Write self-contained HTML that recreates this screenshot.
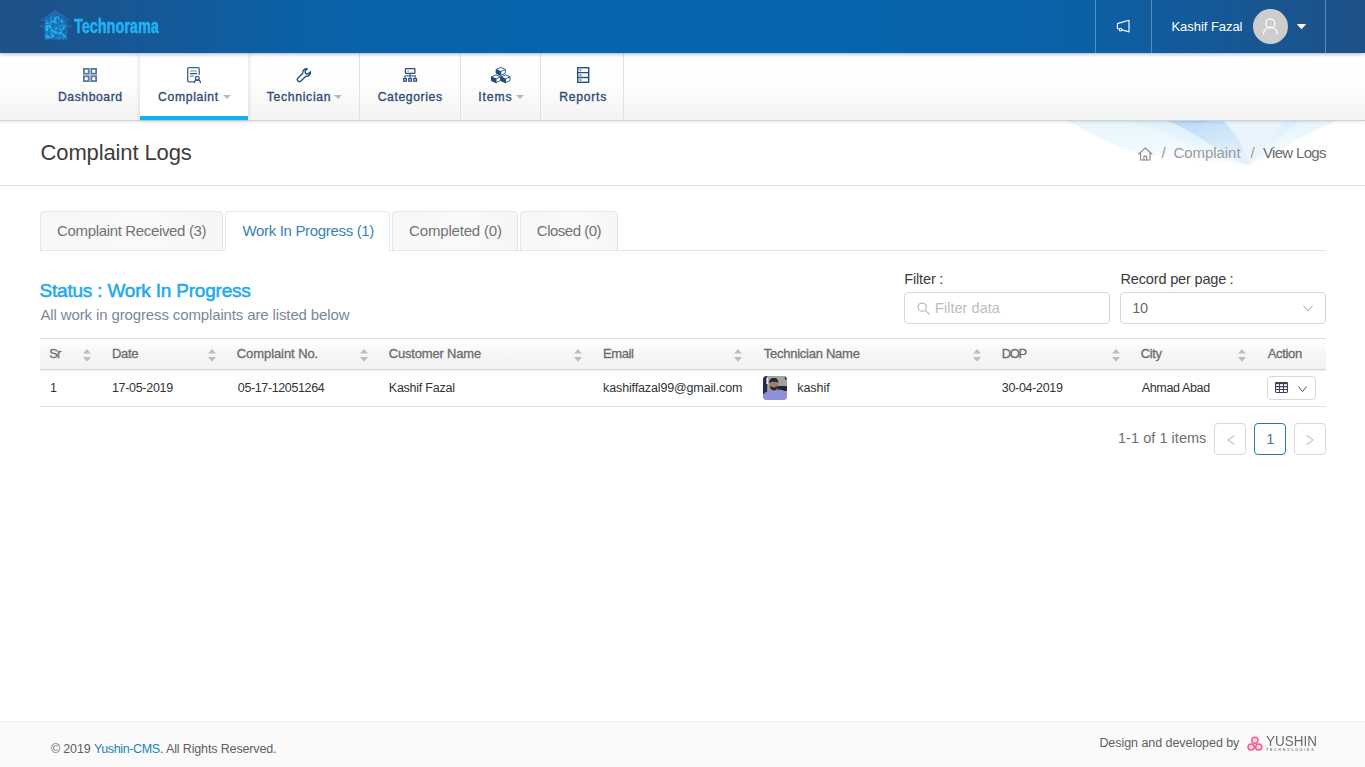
<!DOCTYPE html>
<html lang="en">
<head>
<meta charset="utf-8">
<title>Complaint Logs</title>
<style>
*{box-sizing:border-box;margin:0;padding:0}
html,body{width:1365px;height:767px;overflow:hidden;background:#fff}
body{font-family:"Liberation Sans","DejaVu Sans",sans-serif;font-size:14px;color:#333;position:relative}
a{text-decoration:none;color:inherit}
.t{position:absolute;white-space:pre;line-height:normal}
.a{position:absolute}
svg{position:absolute;overflow:visible}
/* header */
#hdr{position:absolute;left:0;top:0;width:1365px;height:53px;background:linear-gradient(to right,#1f5088 0%,#0b61a6 22%,#0564ae 40%,#0564ae 62%,#0b61a6 78%,#1f5088 100%);box-shadow:0 1px 4px rgba(8,50,100,.38);z-index:3}
.hsep{position:absolute;top:0;width:1px;height:53px;background:rgba(255,255,255,.3)}
#avatar{position:absolute;left:1253px;top:9px;width:35px;height:35px;border-radius:50%;background:#cdcdcd}
/* nav */
#nav{position:absolute;left:0;top:53px;width:1365px;height:68px;background:linear-gradient(to bottom,#fff 0%,#fefefe 45%,#f3f3f3 100%);border-bottom:1px solid #d2d2d2;box-shadow:0 1px 3px rgba(0,0,0,.10);z-index:2}
.ni{position:absolute;top:0;height:67px;border-right:1px solid #e1e1e1}
.ni.act{background:#fff;border-right:none;border-bottom:4px solid #0eb1f0;box-shadow:0 0 5px rgba(0,0,0,.16)}
.car{position:absolute;width:0;height:0;border-left:4px solid transparent;border-right:4px solid transparent;border-top:4px solid #b4bac3}
/* title */
#ttlline{position:absolute;left:0;top:185px;width:1365px;height:1px;background:#e3e3e3}
/* tabs */
#tabline{position:absolute;left:40px;top:250px;width:1286px;height:1px;background:#e4e4e4}
.tab{position:absolute;top:211px;height:40px;border:1px solid #e6e6e6;border-radius:4px 4px 0 0;background:linear-gradient(to right,#f7f7f7 0%,#fafafa 60%,#f6f6f6 100%)}
.tab.act{background:#fff;border-bottom-color:#fff}
.inp{position:absolute;top:292px;height:32px;width:206px;border:1px solid #d6d6d6;border-radius:4px;background:#fff}
/* table */
#th{position:absolute;left:40px;top:338px;width:1286px;height:32px;background:linear-gradient(to bottom,#fff 0%,#fdfdfd 15%,#f6f6f6 50%,#f2f2f2 100%);border-top:1px solid #dcdcdc;border-bottom:1px solid #d9d9d9;box-shadow:0 1px 0 #efefef}
#rowline{position:absolute;left:40px;top:406px;width:1286px;height:1px;background:#e0e0e0}
.so{position:absolute;top:349.5px;width:8px;height:12px}
.so:before,.so:after{content:"";position:absolute;left:0;width:0;height:0;border-left:4px solid transparent;border-right:4px solid transparent}
.so:before{top:0;border-bottom:4.6px solid #c1c1c1}
.so:after{top:7.4px;border-top:4.6px solid #c1c1c1}
.btn{position:absolute;border:1px solid #d9d9d9;border-radius:4px;background:#fff}
/* footer */
#ft{position:absolute;left:0;top:721px;width:1365px;height:46px;background:#fafafa;border-top:1px solid #f1f1f1}
</style>
</head>
<body>
<div id="hdr">
  <svg style="left:40px;top:10px" width="32" height="31" viewBox="0 0 32 31" fill="none" stroke="#3fb0f0" stroke-width=".8">
<path d="M15.2 1.6 L2.9 11 H5.1 V29.5 H26.5 V11 H27.5 Z" fill="#1b8cdb" fill-opacity=".5" stroke="none"/>
<g fill="#27b8fb" stroke="none"><rect x="21.3" y="23.6" width="3" height="2" fill-opacity="0.5"/><rect x="18.9" y="26.4" width="2.5" height="1.5" fill-opacity="0.5"/><rect x="5.6" y="18.9" width="1.5" height="1.2" fill-opacity="0.65"/><rect x="9.8" y="12.1" width="1.5" height="2.5" fill-opacity="0.65"/><rect x="17.5" y="21.3" width="3" height="1.2" fill-opacity="0.5"/><rect x="23.3" y="15.2" width="2" height="2" fill-opacity="0.8"/><rect x="14.3" y="7.2" width="1.5" height="2.5" fill-opacity="0.8"/><rect x="11.8" y="24.8" width="2.5" height="2" fill-opacity="1"/><rect x="18.2" y="27.8" width="1.2" height="1.5" fill-opacity="0.5"/><rect x="11.0" y="11.9" width="1.5" height="2.5" fill-opacity="0.8"/><rect x="17.3" y="23.2" width="2.5" height="1.2" fill-opacity="0.8"/><rect x="15.3" y="12.1" width="1.5" height="2" fill-opacity="0.65"/><rect x="10.0" y="23.7" width="2" height="2" fill-opacity="0.65"/><rect x="13.8" y="13.7" width="2" height="2" fill-opacity="0.5"/><rect x="10.7" y="8.0" width="1.2" height="2.5" fill-opacity="0.65"/><rect x="6.4" y="12.4" width="2.5" height="1.2" fill-opacity="0.5"/><rect x="5.7" y="26.9" width="2.5" height="2" fill-opacity="0.65"/><rect x="9.1" y="15.0" width="2" height="2.5" fill-opacity="0.65"/><rect x="23.4" y="16.6" width="1.2" height="2.5" fill-opacity="0.65"/><rect x="6.7" y="15.5" width="2.5" height="2" fill-opacity="0.8"/><rect x="20.1" y="20.1" width="1.2" height="2" fill-opacity="0.8"/><rect x="18.9" y="17.9" width="2" height="2" fill-opacity="0.5"/><rect x="10.5" y="9.8" width="2.5" height="2" fill-opacity="0.8"/><rect x="11.0" y="19.6" width="3" height="2" fill-opacity="1"/><rect x="15.5" y="16.5" width="2" height="2" fill-opacity="0.65"/><rect x="6.5" y="23.2" width="1.2" height="2.5" fill-opacity="1"/><rect x="18.2" y="7.3" width="1.5" height="2.5" fill-opacity="0.65"/><rect x="10.3" y="7.3" width="1.5" height="1.2" fill-opacity="0.65"/><rect x="12.8" y="11.8" width="3" height="1.2" fill-opacity="0.5"/><rect x="8.2" y="26.4" width="3" height="1.5" fill-opacity="0.5"/><rect x="9.7" y="16.1" width="2" height="1.2" fill-opacity="0.8"/><rect x="12.9" y="24.0" width="2" height="1.5" fill-opacity="0.8"/><rect x="6.1" y="12.6" width="2.5" height="1.5" fill-opacity="1"/><rect x="17.8" y="11.8" width="1.5" height="1.5" fill-opacity="0.5"/><rect x="10.5" y="26.8" width="2.5" height="1.2" fill-opacity="0.65"/><rect x="14.5" y="21.3" width="2.5" height="2" fill-opacity="1"/><rect x="21.3" y="10.5" width="1.5" height="2" fill-opacity="0.8"/><rect x="18.0" y="21.9" width="2" height="2" fill-opacity="0.5"/><rect x="11.4" y="22.2" width="2.5" height="2" fill-opacity="0.65"/><rect x="8.6" y="14.6" width="1.2" height="1.2" fill-opacity="0.5"/><rect x="19.7" y="21.6" width="2.5" height="2.5" fill-opacity="0.8"/><rect x="18.9" y="15.0" width="2.5" height="2" fill-opacity="0.8"/><rect x="14.4" y="17.1" width="1.5" height="1.5" fill-opacity="1"/><rect x="13.1" y="16.8" width="2" height="1.5" fill-opacity="0.5"/><rect x="10.7" y="13.9" width="1.2" height="1.2" fill-opacity="0.5"/><rect x="5.9" y="18.7" width="2" height="2.5" fill-opacity="1"/><rect x="21.4" y="9.9" width="1.2" height="2.5" fill-opacity="0.5"/><rect x="5.6" y="10.3" width="2" height="1.2" fill-opacity="0.8"/><rect x="8.8" y="17.1" width="3" height="1.5" fill-opacity="0.8"/><rect x="23.0" y="25.4" width="2" height="1.5" fill-opacity="1"/><rect x="8.2" y="25.7" width="1.2" height="2.5" fill-opacity="1"/><rect x="5.6" y="19.1" width="2.5" height="1.5" fill-opacity="0.8"/><rect x="10.7" y="18.8" width="1.5" height="2" fill-opacity="0.8"/><rect x="5.5" y="24.5" width="2.5" height="2.5" fill-opacity="0.8"/><rect x="15.5" y="18.2" width="2.5" height="2" fill-opacity="0.65"/><rect x="7.1" y="15.5" width="1.5" height="1.5" fill-opacity="1"/><rect x="13.1" y="10.5" width="2" height="1.2" fill-opacity="1"/><rect x="14.0" y="7.6" width="2" height="2.5" fill-opacity="0.65"/><rect x="24.6" y="25.5" width="1.2" height="2" fill-opacity="1"/><rect x="9.6" y="20.4" width="1.2" height="2" fill-opacity="0.65"/><rect x="20.6" y="17.7" width="1.2" height="1.5" fill-opacity="0.5"/><rect x="14.2" y="10.0" width="2" height="1.5" fill-opacity="1"/><rect x="20.9" y="9.7" width="1.2" height="2.5" fill-opacity="1"/><rect x="22.3" y="13.4" width="1.2" height="2.5" fill-opacity="0.5"/><rect x="14.9" y="23.2" width="1.5" height="1.2" fill-opacity="0.5"/><rect x="13.6" y="19.5" width="2" height="2.5" fill-opacity="0.5"/><rect x="20.1" y="19.5" width="1.5" height="1.5" fill-opacity="0.65"/><rect x="16.1" y="26.9" width="1.2" height="1.2" fill-opacity="0.5"/><rect x="13.5" y="12.0" width="1.5" height="1.2" fill-opacity="1"/><rect x="15.6" y="6.0" width="3" height="2.5" fill-opacity="0.5"/><rect x="5.6" y="15.3" width="3" height="1.2" fill-opacity="0.8"/><rect x="5.4" y="16.7" width="2.5" height="2" fill-opacity="1"/><rect x="22.8" y="28.1" width="1.5" height="1.2" fill-opacity="0.65"/><rect x="14.8" y="9.1" width="2" height="1.2" fill-opacity="0.65"/><rect x="21.6" y="17.2" width="2" height="2.5" fill-opacity="0.8"/></g>
<g fill="#155a9c" fill-opacity=".75" stroke="none"><rect x="19.1" y="20.7" width="1.3" height="1.3"/><rect x="23.1" y="21.3" width="1.3" height="1.6"/><rect x="16.5" y="20.5" width="1.6" height="1"/><rect x="11.6" y="12.5" width="1" height="1.3"/><rect x="17.0" y="9.0" width="1" height="1"/><rect x="23.3" y="21.0" width="1.6" height="1.6"/><rect x="10.1" y="19.5" width="1" height="1.6"/><rect x="25.0" y="17.9" width="1" height="1.6"/><rect x="12.4" y="14.5" width="1.6" height="1"/><rect x="14.4" y="13.6" width="1.6" height="1.3"/><rect x="11.3" y="13.1" width="1.6" height="1.3"/><rect x="19.5" y="6.8" width="1.6" height="1.3"/><rect x="11.4" y="16.8" width="1" height="1.3"/><rect x="15.5" y="9.6" width="1.3" height="1"/><rect x="12.1" y="23.3" width="1.3" height="1"/><rect x="13.3" y="16.5" width="1.3" height="1"/><rect x="20.9" y="16.9" width="1.6" height="1.6"/><rect x="10.8" y="15.4" width="1.3" height="1"/><rect x="11.5" y="8.7" width="1.3" height="1.6"/><rect x="6.7" y="23.9" width="1.3" height="1.3"/><rect x="15.1" y="4.6" width="1.3" height="1.6"/><rect x="23.6" y="20.0" width="1.3" height="1.6"/><rect x="15.1" y="16.2" width="1" height="1.6"/><rect x="19.8" y="15.1" width="1.3" height="1.3"/><rect x="13.7" y="19.4" width="1.6" height="1"/><rect x="10.6" y="25.6" width="1" height="1.3"/><rect x="13.6" y="23.8" width="1.6" height="1.6"/><rect x="15.5" y="4.7" width="1.6" height="1.3"/><rect x="16.6" y="19.6" width="1.3" height="1"/><rect x="12.9" y="18.7" width="1.3" height="1"/></g>
<path d="M1 10.7 L15.1 .8 L30.2 10.7" stroke-opacity=".55"/>
<path d="M0 16 H4.4 M27.2 16 H31.8" stroke-opacity=".45"/>
<path d="M4.9 12.5 V29.6 M26.7 12.5 V29.6" stroke-opacity=".4" stroke-width=".7"/>
</svg>
  <span class="t" style="left:73.5px;top:15px;font-size:19.5px;color:#1cb6f8;font-weight:bold;transform:scaleX(0.74);transform-origin:0 0;-webkit-text-stroke:0.5px #1cb6f8">Technorama</span>
  <div class="hsep" style="left:1095px"></div>
  <div class="hsep" style="left:1151px"></div>
  <div class="hsep" style="left:1325px"></div>
  <svg style="left:1116px;top:19px" width="15" height="15" viewBox="0 0 15 15" fill="none" stroke="#fff" stroke-width="1.15" stroke-linejoin="round">
<path d="M1.4 5.2 Q1.4 4.6 2 4.4 L13 1.3 V12.9 L2 9.7 Q1.4 9.5 1.4 8.9 Z"/>
<circle cx="4.5" cy="10.6" r="1.35" fill="#145b9c"/></svg>
  <span class="t" style="left:1171.5px;top:19px;font-size:13px;color:#fff;letter-spacing:-0.05px">Kashif Fazal</span>
  <div id="avatar"></div>
  <svg style="left:1253px;top:9px" width="35" height="35" viewBox="0 0 35 35" fill="none" stroke="#fff" stroke-width="1.3" stroke-linecap="round">
<circle cx="17.4" cy="14.4" r="4.5"/><path d="M10.5 24.8 a6.9 6.6 0 0 1 13.8 0"/></svg>
  <svg style="left:1297px;top:24px" width="9" height="5" viewBox="0 0 9 5"><path d="M0.6 0h7.8a.5.5 0 0 1 .35.85L4.9 4.7a.55.55 0 0 1-.8 0L.25.85A.5.5 0 0 1 .6 0z" fill="#fff"/></svg>
</div>
<div id="nav">
  <div class="ni act" style="left:140px;width:108px"></div>
  <div class="ni" style="left:248px;width:112px"></div>
  <div class="ni" style="left:360px;width:101px"></div>
  <div class="ni" style="left:461px;width:80px"></div>
  <div class="ni" style="left:541px;width:83px"></div>
</div>
<div class="a" style="left:0;top:0;width:1365px;height:130px;z-index:4">
  <span class="t" style="left:58px;top:90px;font-size:12.2px;color:#2f4d76;letter-spacing:0.55px;-webkit-text-stroke:0.35px #2f4d76">Dashboard</span><span class="t" style="left:158.1px;top:90px;font-size:12.2px;color:#2f4d76;letter-spacing:0.64px;-webkit-text-stroke:0.35px #2f4d76">Complaint</span><span class="t" style="left:266.8px;top:90px;font-size:12.2px;color:#2f4d76;letter-spacing:0.68px;-webkit-text-stroke:0.35px #2f4d76">Technician</span><span class="t" style="left:377.7px;top:90px;font-size:12.2px;color:#2f4d76;letter-spacing:0.6px;-webkit-text-stroke:0.35px #2f4d76">Categories</span><span class="t" style="left:478.3px;top:90px;font-size:12.2px;color:#2f4d76;letter-spacing:0.85px;-webkit-text-stroke:0.35px #2f4d76">Items</span><span class="t" style="left:559.3px;top:90px;font-size:12.2px;color:#2f4d76;letter-spacing:0.72px;-webkit-text-stroke:0.35px #2f4d76">Reports</span>
  <i class="car" style="left:222.5px;top:95px"></i>
  <i class="car" style="left:334px;top:95px"></i>
  <i class="car" style="left:516px;top:95px"></i>
  <svg style="left:83px;top:68px" width="14" height="14" viewBox="0 0 14 14" fill="none" stroke="#5379a5" stroke-width="1.8">
<rect x=".9" y=".9" width="4.8" height="4.8"/><rect x="8.3" y=".9" width="4.8" height="4.8"/><rect x=".9" y="8.3" width="4.8" height="4.8"/><rect x="8.3" y="8.3" width="4.8" height="4.8"/></svg>
<svg style="left:187px;top:67px" width="14" height="16" viewBox="0 0 14 16" fill="none" stroke="#24507f" stroke-width="1.3" stroke-linecap="round">
<path d="M6.6 14.8 H1.7 a1 1 0 0 1 -1 -1 V1.7 a1 1 0 0 1 1 -1 H11.2 a1 1 0 0 1 1 1 V7.4" stroke="#3b648f"/>
<path d="M3.4 4 H9.6 M3.4 9.2 H6.4" stroke="#6d8db3" stroke-width="1.2"/><path d="M3.4 6.6 H9.6" stroke-width="1.1"/>
<circle cx="10.3" cy="11.2" r="1.9" stroke-width="1.2"/><path d="M7.4 15.6 a3 2.6 0 0 1 6 0" stroke-width="1.2"/></svg>
<svg style="left:297px;top:68px" width="15" height="14" viewBox="0 0 15 14" fill="none" stroke="#24507f" stroke-width="1.35" stroke-linejoin="round">
<path d="M10.3 .8 C7.6 .3 5.3 2.5 5.8 5.2 L1 10 a2 2 0 0 0 2.9 2.9 L8.8 8.2 C11.6 8.7 13.9 6.4 13.4 3.8 L10.9 6.2 L8.6 5.5 L8 3.2 Z"/></svg>
<svg style="left:403px;top:68px" width="14.2" height="14" viewBox="0 0 14.2 14" fill="none" stroke="#24507f" stroke-width="1.25">
<rect x="2.4" y=".7" width="9.5" height="4.6" rx=".4"/><path d="M4.4 3.1 H6" stroke="#6d8db3" stroke-width="1"/>
<path d="M7.1 5.4 V7.9 M2 10.2 V7.9 H12.2 V10.2 M7.1 7.9 V10.2" stroke="#456c99"/>
<rect x=".7" y="10.6" width="2.7" height="2.6"/><rect x="5.75" y="10.6" width="2.7" height="2.6"/><rect x="10.8" y="10.6" width="2.7" height="2.6"/></svg>
<svg style="left:490.6px;top:66.9px" width="19.6" height="16" viewBox="0 0 19.6 16" stroke="#1d4b80" stroke-width=".9" stroke-linejoin="round">
<g id="cube"><path d="M9.8 .5 L14.3 2.4 V6.2 L9.8 8.3 L5.3 6.2 V2.4 Z" fill="#fff"/><path d="M5.3 2.4 L9.8 4.5 V8.3 L5.3 6.2 Z" fill="#1d4b80"/><path d="M9.8 4.5 L14.3 2.4" fill="none"/></g>
<g transform="translate(-4.75,7.4)"><path d="M9.8 .5 L14.3 2.4 V6.2 L9.8 8.3 L5.3 6.2 V2.4 Z" fill="#fff"/><path d="M5.3 2.4 L9.8 4.5 V8.3 L5.3 6.2 Z" fill="#1d4b80"/><path d="M9.8 4.5 L14.3 2.4" fill="none"/></g>
<g transform="translate(4.75,7.4)"><path d="M9.8 .5 L14.3 2.4 V6.2 L9.8 8.3 L5.3 6.2 V2.4 Z" fill="#fff"/><path d="M5.3 2.4 L9.8 4.5 V8.3 L5.3 6.2 Z" fill="#1d4b80"/><path d="M9.8 4.5 L14.3 2.4" fill="none"/></g>
</svg>
<svg style="left:576.8px;top:66.9px" width="12.4" height="16" viewBox="0 0 12.4 16" fill="none" stroke="#24507f" stroke-width="1.4">
<rect x=".7" y=".7" width="11" height="14.6"/><path d="M.7 5.6 H11.7 M.7 10.5 H11.7"/>
<g fill="#6c8bb2" stroke="none"><rect x="2.5" y="2.2" width="1.9" height="1.9"/><rect x="2.5" y="7.1" width="1.9" height="1.9"/><rect x="2.5" y="12" width="1.9" height="1.9"/></g></svg>
</div>
<svg style="left:1060px;top:121px" width="290" height="50" viewBox="0 0 290 50">
<defs><linearGradient id="wg2" x1="0" y1="0" x2=".6" y2="1"><stop offset="0" stop-color="#a9d3f6"/><stop offset=".45" stop-color="#c6e1f9"/><stop offset="1" stop-color="#e0effc"/></linearGradient>
<linearGradient id="wg1" x1="0" y1="0" x2="0" y2="1"><stop offset="0" stop-color="#e6f5fc"/><stop offset=".6" stop-color="#f2fafe"/><stop offset="1" stop-color="#fbfdff"/></linearGradient>
<linearGradient id="wg3" x1="0" y1="0" x2="0" y2="1"><stop offset="0" stop-color="#dff0fc"/><stop offset=".7" stop-color="#eef7fe"/><stop offset="1" stop-color="#f4fafe"/></linearGradient></defs>
<path d="M8 0 C30 10 50 26 80 32 C120 38 160 42 189 44 C215 36 240 14 276 0 Z" fill="url(#wg1)"/>
<path d="M70 0 C95 6 115 16 138 28 C158 38 175 42 189 44 C208 34 222 14 240 0 Z" fill="url(#wg3)"/>
<path d="M107 0 C125 5 150 24 170 36 C180 42 186 44 190 44 C186 30 176 12 164 0 Z" fill="url(#wg2)" fill-opacity=".8"/>
<path d="M164 0 C176 12 186 30 190 44 C202 32 212 14 224 0 Z" fill="#e9f4fd" fill-opacity=".9"/>
<path d="M122 0 C132 2 142 2 150 0 Z" fill="#9ccbf3" fill-opacity=".6"/>
</svg>
<span class="t" style="left:40.5px;top:140px;font-size:22px;color:#3d3d3d;letter-spacing:-0.12px">Complaint Logs</span>
<svg style="left:1138px;top:146.5px" width="15" height="14" viewBox="0 0 15 14" fill="none" stroke="#8e8e8e" stroke-width="1.2" stroke-linejoin="round" stroke-linecap="round">
<path d="M.8 7 L7.3 .9 L13.8 7"/><path d="M2.6 6.2 V13 H12 V6.2"/><path d="M5.9 13 V9.2 H8.7 V13"/></svg>
<span class="t" style="left:1161.5px;top:144px;font-size:15px;color:#9a9a9a">/</span><span class="t" style="left:1173.5px;top:144px;font-size:15px;color:#9a9a9a;letter-spacing:-0.06px">Complaint</span><span class="t" style="left:1250.5px;top:144px;font-size:15px;color:#9a9a9a">/</span><span class="t" style="left:1263px;top:144px;font-size:15px;color:#6b6b6b;letter-spacing:-0.68px">View Logs</span>
<div id="ttlline"></div>
<div id="tabline"></div>
<div class="tab" style="left:40px;width:183px"></div>
<div class="tab act" style="left:225px;width:165px"></div>
<div class="tab" style="left:392px;width:126px"></div>
<div class="tab" style="left:520px;width:98px"></div>
<span class="t" style="left:57px;top:222px;font-size:15px;color:#727272;letter-spacing:-0.34px">Complaint Received (3)</span><span class="t" style="left:242.5px;top:222px;font-size:15px;color:#3a82b4;letter-spacing:-0.33px">Work In Progress (1)</span><span class="t" style="left:409.1px;top:222px;font-size:15px;color:#727272;letter-spacing:-0.18px">Completed (0)</span><span class="t" style="left:536.8px;top:222px;font-size:15px;color:#727272;letter-spacing:-0.5px">Closed (0)</span>
<span class="t" style="left:39.5px;top:280px;font-size:19px;color:#1fabea;letter-spacing:-0.2px;-webkit-text-stroke:0.55px #1fabea">Status : Work In Progress</span><span class="t" style="left:40.5px;top:306px;font-size:15px;color:#7b8797;letter-spacing:-0.13px">All work in grogress complaints are listed below</span>
<span class="t" style="left:904.3px;top:271px;font-size:14.5px;color:#3a3a3a;letter-spacing:-0.16px">Filter</span><span class="t" style="left:939.2px;top:271px;font-size:14.5px;color:#3a3a3a">:</span><span class="t" style="left:1120.5px;top:271px;font-size:14.5px;color:#3a3a3a;letter-spacing:-0.16px">Record per page</span><span class="t" style="left:1229.5px;top:271px;font-size:14.5px;color:#3a3a3a">:</span>
<div class="inp" style="left:904px"></div>
<div class="inp" style="left:1120px"></div>
<svg style="left:917px;top:302px" width="13" height="13" viewBox="0 0 13 13" fill="none" stroke="#bcbcbc" stroke-width="1.3" stroke-linecap="round">
<circle cx="5.2" cy="5.2" r="4.1"/><path d="M8.4 8.4 L12.2 12"/></svg>
<svg style="left:1303px;top:305px" width="10" height="7" viewBox="0 0 10 7" fill="none" stroke="#bdbdbd" stroke-width="1.1"><path d="M.5 .6 L5 5.9 L9.5 .6"/></svg>
<span class="t" style="left:935px;top:300px;font-size:14.5px;color:#bdbdbd;letter-spacing:0.04px">Filter data</span><span class="t" style="left:1132.2px;top:300px;font-size:14.5px;color:#6a6a6a;letter-spacing:-0.3px">10</span>
<div id="th"></div>
<span class="t" style="left:49.3px;top:346px;font-size:13px;color:#6c6c6c;letter-spacing:-0.9px;-webkit-text-stroke:0.3px #6c6c6c">Sr</span><span class="t" style="left:111.9px;top:346px;font-size:13px;color:#6c6c6c;letter-spacing:-0.27px;-webkit-text-stroke:0.3px #6c6c6c">Date</span><span class="t" style="left:236.8px;top:346px;font-size:13px;color:#6c6c6c;letter-spacing:-0.08px;-webkit-text-stroke:0.3px #6c6c6c">Complaint No.</span><span class="t" style="left:388.8px;top:346px;font-size:13px;color:#6c6c6c;letter-spacing:-0.19px;-webkit-text-stroke:0.3px #6c6c6c">Customer Name</span><span class="t" style="left:603.1px;top:346px;font-size:13px;color:#6c6c6c;letter-spacing:-0.45px;-webkit-text-stroke:0.3px #6c6c6c">Email</span><span class="t" style="left:763.7px;top:346px;font-size:13px;color:#6c6c6c;letter-spacing:-0.25px;-webkit-text-stroke:0.3px #6c6c6c">Technician Name</span><span class="t" style="left:1001.8px;top:346px;font-size:13px;color:#6c6c6c;letter-spacing:-1.4px;-webkit-text-stroke:0.3px #6c6c6c">DOP</span><span class="t" style="left:1140.8px;top:346px;font-size:13px;color:#6c6c6c;letter-spacing:-0.37px;-webkit-text-stroke:0.3px #6c6c6c">City</span><span class="t" style="left:1267.7px;top:346px;font-size:13px;color:#6c6c6c;letter-spacing:-0.34px;-webkit-text-stroke:0.3px #6c6c6c">Action</span>
<svg style="left:83.3px;top:349.3px" width="8" height="13" viewBox="0 0 8 13" fill="#bebebe"><path d="M0 4.6 L4 0 L8 4.6 Z M0 8.1 H8 L4 12.8 Z"/></svg>
<svg style="left:208.2px;top:349.3px" width="8" height="13" viewBox="0 0 8 13" fill="#bebebe"><path d="M0 4.6 L4 0 L8 4.6 Z M0 8.1 H8 L4 12.8 Z"/></svg>
<svg style="left:359.8px;top:349.3px" width="8" height="13" viewBox="0 0 8 13" fill="#bebebe"><path d="M0 4.6 L4 0 L8 4.6 Z M0 8.1 H8 L4 12.8 Z"/></svg>
<svg style="left:574px;top:349.3px" width="8" height="13" viewBox="0 0 8 13" fill="#bebebe"><path d="M0 4.6 L4 0 L8 4.6 Z M0 8.1 H8 L4 12.8 Z"/></svg>
<svg style="left:734px;top:349.3px" width="8" height="13" viewBox="0 0 8 13" fill="#bebebe"><path d="M0 4.6 L4 0 L8 4.6 Z M0 8.1 H8 L4 12.8 Z"/></svg>
<svg style="left:973.2px;top:349.3px" width="8" height="13" viewBox="0 0 8 13" fill="#bebebe"><path d="M0 4.6 L4 0 L8 4.6 Z M0 8.1 H8 L4 12.8 Z"/></svg>
<svg style="left:1112px;top:349.3px" width="8" height="13" viewBox="0 0 8 13" fill="#bebebe"><path d="M0 4.6 L4 0 L8 4.6 Z M0 8.1 H8 L4 12.8 Z"/></svg>
<svg style="left:1238.2px;top:349.3px" width="8" height="13" viewBox="0 0 8 13" fill="#bebebe"><path d="M0 4.6 L4 0 L8 4.6 Z M0 8.1 H8 L4 12.8 Z"/></svg>
<span class="t" style="left:50px;top:381px;font-size:12.5px;color:#333">1</span><span class="t" style="left:111.9px;top:381px;font-size:12.5px;color:#333;letter-spacing:-0.3px">17-05-2019</span><span class="t" style="left:237.8px;top:381px;font-size:12.5px;color:#333;letter-spacing:-0.37px">05-17-12051264</span><span class="t" style="left:388.8px;top:381px;font-size:12.5px;color:#333;letter-spacing:-0.24px">Kashif Fazal</span><span class="t" style="left:603.1px;top:381px;font-size:12.5px;color:#333;letter-spacing:-0.14px">kashiffazal99@gmail.com</span><span class="t" style="left:797.2px;top:381px;font-size:12.5px;color:#333;letter-spacing:-0.04px">kashif</span><span class="t" style="left:1001.8px;top:381px;font-size:12.5px;color:#333;letter-spacing:-0.31px">30-04-2019</span><span class="t" style="left:1141.8px;top:381px;font-size:12.5px;color:#333;letter-spacing:-0.36px">Ahmad Abad</span>
<svg style="left:763px;top:376px" width="24" height="24" viewBox="0 0 24 24">
<defs><clipPath id="pc"><rect width="24" height="24" rx="4"/></clipPath><filter id="pb" x="-10%" y="-10%" width="120%" height="120%"><feGaussianBlur stdDeviation=".7"/></filter></defs>
<g clip-path="url(#pc)"><rect width="24" height="24" fill="#a3a39e"/><g filter="url(#pb)">
<rect x="-1" y="-1" width="5.2" height="26" fill="#222b4c"/><rect x="3.4" y="1.5" width="1.8" height="6.5" fill="#e6ecf6"/>
<rect x="14.5" y="10" width="10.5" height="5" fill="#28262e"/><rect x="21.8" y="-1" width="3" height="4.5" fill="#3a3a3e"/>
<path d="M-1 25 V20 C1 17 4 15 7.5 14 L11.5 16 L16 13.6 C20 14 23 15.5 25 17.5 V25 Z" fill="#8f8fdc"/>
<ellipse cx="10.8" cy="8" rx="4.2" ry="4.6" fill="#a47b66"/>
<path d="M6 7 C5.4 1 16 1 15.6 7 C14 5.2 8 5.2 6 7 Z" fill="#20273a"/><ellipse cx="10.8" cy="3.6" rx="3.6" ry="1.6" fill="#20273a"/>
<path d="M6.8 9.6 C6.8 16.2 14.9 16.2 15 9.6 C13.6 12 8.2 12 6.8 9.6 Z" fill="#25252d"/>
</g></g></svg>
<div class="btn" style="left:1267px;top:376px;width:49px;height:24px"></div>
<svg style="left:1275px;top:382px" width="13" height="11" viewBox="0 0 13 11" fill="none" stroke="#4c3d5a" stroke-width="1.1">
<rect x=".55" y=".55" width="11.9" height="9.9" rx=".9"/><path d="M.6 4.6 H12.4 M.6 7.5 H12.4 M4.5 1.5 V10.4 M8.5 1.5 V10.4"/><path d="M.6 1.4 H12.4" stroke-width="1.5"/></svg>
<svg style="left:1297.6px;top:385.6px" width="10" height="7" viewBox="0 0 10 7" fill="none" stroke="#505050" stroke-width="1"><path d="M.4 .5 L4.5 5.6 L8.6 .5"/></svg>
<div id="rowline"></div>
<span class="t" style="left:1118px;top:430px;font-size:14.5px;color:#6e6e6e;letter-spacing:0.04px">1-1 of 1 items</span>
<div class="btn" style="left:1214px;top:423px;width:32px;height:32px"></div>
<div class="btn" style="left:1254px;top:423px;width:32px;height:32px;border-color:#1f7ba8"></div>
<div class="btn" style="left:1294px;top:423px;width:32px;height:32px"></div>
<span class="t" style="left:1266.2px;top:431px;font-size:14.5px;color:#4a7791">1</span>
<svg style="left:1226.5px;top:435px" width="8" height="10" viewBox="0 0 8 10" fill="none" stroke="#c4c4c4" stroke-width="1.1"><path d="M7.4 .5 L1 5 L7.4 9.5"/></svg>
<svg style="left:1306px;top:435px" width="8" height="10" viewBox="0 0 8 10" fill="none" stroke="#c4c4c4" stroke-width="1.1"><path d="M.6 .5 L7 5 L.6 9.5"/></svg>
<div id="ft"></div>
<span class="t" style="left:50.9px;top:742px;font-size:12.5px;color:#5f5f5f;letter-spacing:-0.15px">© 2019 </span><span class="t" style="left:93.9px;top:742px;font-size:12.5px;color:#2283b8;letter-spacing:-0.36px">Yushin-CMS</span><span class="t" style="left:160px;top:742px;font-size:12.5px;color:#5f5f5f;letter-spacing:-0.14px">. All Rights Reserved.</span><span class="t" style="left:1099.4px;top:736px;font-size:12.5px;color:#5f5f5f;letter-spacing:-0.05px">Design and developed by</span>
<svg style="left:1247px;top:735.5px" width="16" height="16" viewBox="0 0 16 16" fill="#fbd3e2" stroke="#ee5f94" stroke-width="1.5">
<circle cx="7.9" cy="4.3" r="3.1"/><circle cx="4.1" cy="11" r="3.1"/><circle cx="11.7" cy="11" r="3.1"/></svg>
<span class="t" style="left:1266px;top:748px;font-size:3.4px;letter-spacing:1.85px;color:#7a7a7a;font-weight:bold">TECHNOLOGIES</span>
<span class="t" style="left:1265.5px;top:732px;font-size:15px;color:#6a6a6a;transform:scaleX(0.9);transform-origin:0 0">YUSHIN</span>
</body>
</html>
